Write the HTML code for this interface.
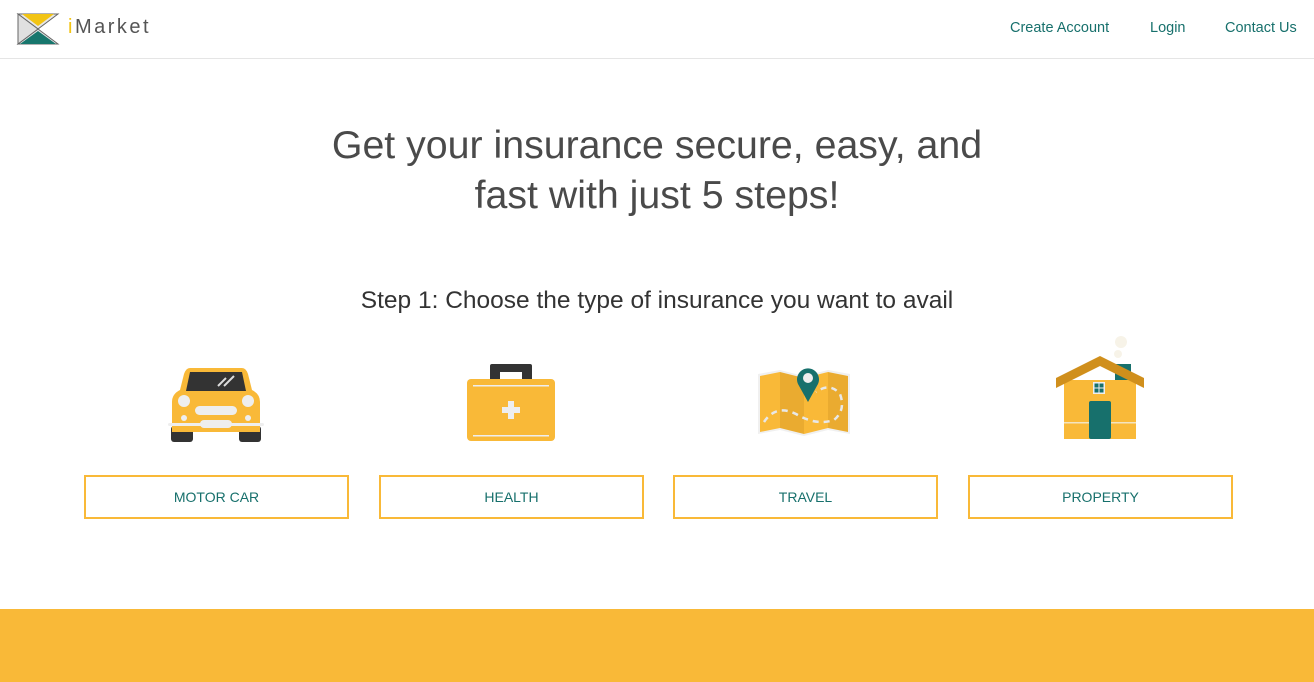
<!DOCTYPE html>
<html><head><meta charset="utf-8"><style>
*{margin:0;padding:0;box-sizing:border-box}
body{width:1314px;height:682px;overflow:hidden;background:#fff;font-family:"Liberation Sans",sans-serif;position:relative}
.hdr{height:59px;border-bottom:1px solid #e5e5e5;position:relative}
.nav a{position:absolute;top:20px;font-size:14.5px;color:#17706c;text-decoration:none}
.logo{position:absolute;left:68px;top:16px;font-size:20px;letter-spacing:2.5px;color:#555}
h1{position:absolute;top:120px;left:0;width:1314px;text-align:center;font-weight:normal;font-size:39.3px;line-height:50px;color:#4a4a4a}
h2{position:absolute;top:287px;left:0;width:1314px;text-align:center;font-weight:normal;font-size:24.5px;color:#333}
.btn{position:absolute;top:475px;width:265px;height:44px;border:2px solid #f9b938;text-align:center;line-height:40px;font-size:14px;color:#17706c}
.foot{position:absolute;top:609px;left:0;width:1314px;height:73px;background:#f9b938}
svg{position:absolute}
</style></head><body>
<div class="hdr">
<svg style="left:16px;top:12px" width="44" height="34" viewBox="0 0 44 34">
<polygon points="2,2 42,2 22,17 42,32 2,32 22,17" fill="#e6e6e6" stroke="#666" stroke-width="1"/>
<polygon points="2,2 22,17 2,32" fill="#e0e0e0" stroke="#666" stroke-width="1"/>
<polygon points="6,2 38,2 22,14" fill="#f2c414"/>
<polygon points="22,19 40,32 4,32" fill="#17766d"/>
</svg>
<div class="logo"><span style="color:#f2c414">i</span>Market</div>
<div class="nav"><a style="left:1010px">Create Account</a><a style="left:1150px">Login</a><a style="left:1225px">Contact Us</a></div>
</div>
<h1>Get your insurance secure, easy, and<br>fast with just 5 steps!</h1>
<h2>Step 1: Choose the type of insurance you want to avail</h2>

<svg style="left:168px;top:366px" width="96" height="78" viewBox="0 0 96 78">
<rect x="3" y="60" width="22" height="16" rx="3" fill="#333"/><rect x="71" y="60" width="22" height="16" rx="3" fill="#333"/>
<path d="M22 2 H74 Q78 2 80 8 L84 24 Q92 28 92 36 V66 H4 V36 Q4 28 12 24 L16 8 Q18 2 22 2 Z" fill="#f9b938"/>
<path d="M22 6 H74 L78 25 H18 Z" fill="#333"/>
<path d="M58 12 L50 20 M66 10 L56 20" stroke="#ddd" stroke-width="2"/>
<circle cx="16" cy="35" r="6" fill="#eee"/><circle cx="80" cy="35" r="6" fill="#eee"/>
<circle cx="16" cy="52" r="3" fill="#eee"/><circle cx="80" cy="52" r="3" fill="#eee"/>
<rect x="27" y="40" width="42" height="9" rx="4.5" fill="#eee"/>
<rect x="0" y="57" width="96" height="3" rx="1.5" fill="#eee"/>
<rect x="32" y="54" width="32" height="8" rx="4" fill="#eee"/>
</svg>

<svg style="left:466px;top:364px" width="90" height="78" viewBox="0 0 90 78">
<rect x="24" y="0" width="42" height="18" rx="2" fill="#333"/><rect x="34" y="8" width="22" height="8" fill="#fff"/>
<rect x="1" y="15" width="88" height="62" rx="4" fill="#f9b938"/>
<rect x="7" y="21" width="76" height="1.5" fill="#eee"/><rect x="7" y="71" width="76" height="1.5" fill="#eee"/>
<rect x="42" y="37" width="6" height="18" fill="#eee"/><rect x="36" y="43" width="18" height="6" fill="#eee"/>
</svg>

<svg style="left:756px;top:362px" width="96" height="76" viewBox="0 0 96 76">
<path d="M2 12 L24 8 L48 14 L72 8 L94 12 V72 L72 68 L48 74 L24 68 L2 72 Z" fill="#f0f0f0"/>
<path d="M4 14 L24 10 V66 L4 70 Z M48 16 L72 10 V66 L48 72 Z" fill="#f9b938"/>
<path d="M24 10 L48 16 V72 L24 66 Z M72 10 L92 14 V70 L72 66 Z" fill="#eaab30"/>
<path d="M8 60 Q20 42 40 52 Q60 64 78 58 Q90 48 84 32 Q74 20 60 30" fill="none" stroke="#e8e8e8" stroke-width="2.5" stroke-dasharray="6 5"/>
<path d="M52 40 L42 22 A11 11 0 1 1 62 22 Z" fill="#17706c"/>
<circle cx="52" cy="16" r="5" fill="#eee"/>
</svg>

<svg style="left:1055px;top:334px" width="90" height="106" viewBox="0 0 90 106">
<circle cx="66" cy="8" r="6" fill="#f7f3e8"/><circle cx="63" cy="20" r="4" fill="#f7f3e8"/>
<rect x="60" y="30" width="16" height="20" fill="#17706c"/>
<rect x="9" y="46" width="72" height="59" fill="#f9b938"/>
<rect x="9" y="88" width="72" height="1.5" fill="#f3e4c0"/>
<path d="M1 44 L45 22 L89 44 V54 L45 32 L1 54 Z" fill="#d08f1c"/>
<rect x="38" y="48" width="12" height="12" fill="#eee"/><rect x="39.5" y="49.5" width="4" height="4" fill="#17706c"/><rect x="44.5" y="49.5" width="4" height="4" fill="#17706c"/><rect x="39.5" y="54.5" width="4" height="4" fill="#17706c"/><rect x="44.5" y="54.5" width="4" height="4" fill="#17706c"/>
<rect x="34" y="67" width="22" height="38" rx="2" fill="#17706c"/>
</svg>

<div class="btn" style="left:84px">MOTOR CAR</div>
<div class="btn" style="left:379px">HEALTH</div>
<div class="btn" style="left:673px">TRAVEL</div>
<div class="btn" style="left:968px">PROPERTY</div>
<div class="foot"></div>
</body></html>
